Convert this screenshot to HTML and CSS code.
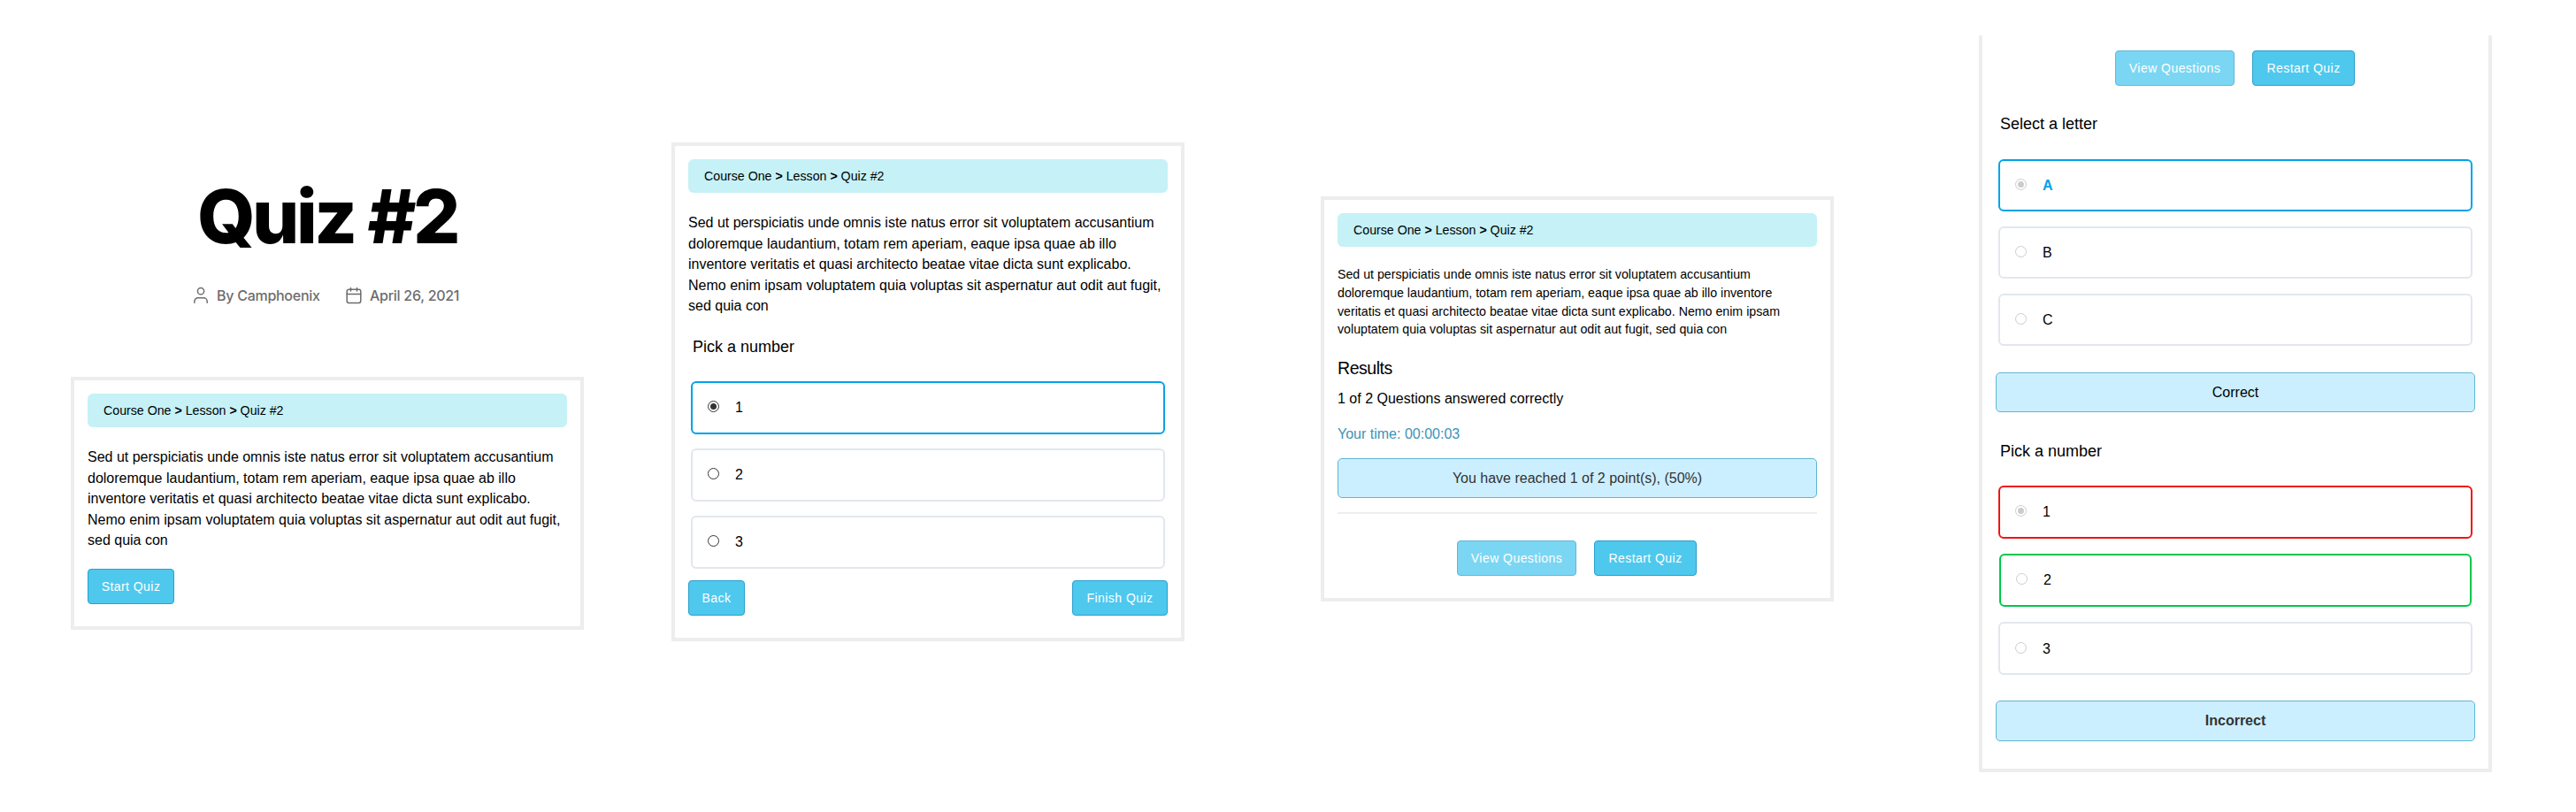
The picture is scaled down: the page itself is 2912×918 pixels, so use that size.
FILE: index.html
```html
<!DOCTYPE html>
<html lang="en">
<head>
<meta charset="utf-8">
<title>Quiz #2</title>
<link rel="stylesheet" href="styles.css">
</head>
<body>
<main class="page">
  <section class="column column--start">
    <header class="post-header">
      <h1 class="post-title">Quiz #2</h1>
      <div class="post-meta">
        <span class="meta-item meta-item--author">
          <svg class="meta-icon" width="18" height="20" viewBox="0 0 18 20" fill="none" stroke="currentColor" stroke-width="1.5" stroke-linecap="round"><circle cx="9" cy="5.2" r="3.6"/><path d="M1.800 18.300v-1.500a4 4 0 0 1 4-4h6.400a4 4 0 0 1 4 4v1.500"/></svg>
          <span>By Camphoenix</span>
        </span>
        <span class="meta-item">
          <svg class="meta-icon" width="18" height="20" viewBox="0 0 18 20" fill="none" stroke="currentColor" stroke-width="1.5" stroke-linecap="round"><rect x="1.200" y="3.200" width="15.600" height="15.300" rx="2.200"/><path d="M1.200 8.500h15.600M5.500 1.500v3.500M12.500 1.500v3.500"/></svg>
          <span>April 26, 2021</span>
        </span>
      </div>
    </header>
    <div class="card">
      <nav class="crumbs">Course One <b>&gt;</b> Lesson <b>&gt;</b> Quiz #2</nav>
      <p class="intro">Sed ut perspiciatis unde omnis iste natus error sit voluptatem accusantium<br>doloremque laudantium, totam rem aperiam, eaque ipsa quae ab illo<br>inventore veritatis et quasi architecto beatae vitae dicta sunt explicabo.<br>Nemo enim ipsam voluptatem quia voluptas sit aspernatur aut odit aut fugit,<br>sed quia con</p>
      <div class="actions actions--start"><button class="btn btn--start">Start Quiz</button></div>
    </div>
  </section>

  <section class="column column--question">
    <div class="card">
      <nav class="crumbs">Course One <b>&gt;</b> Lesson <b>&gt;</b> Quiz #2</nav>
      <p class="intro">Sed ut perspiciatis unde omnis iste natus error sit voluptatem accusantium<br>doloremque laudantium, totam rem aperiam, eaque ipsa quae ab illo<br>inventore veritatis et quasi architecto beatae vitae dicta sunt explicabo.<br>Nemo enim ipsam voluptatem quia voluptas sit aspernatur aut odit aut fugit,<br>sed quia con</p>
      <h2 class="question">Pick a number</h2>
      <div class="options">
        <label class="option option--selected"><span class="radio radio--on"></span><span class="option-text">1</span></label>
        <label class="option"><span class="radio"></span><span class="option-text">2</span></label>
        <label class="option"><span class="radio"></span><span class="option-text">3</span></label>
      </div>
      <div class="actions actions--split">
        <button class="btn btn--back">Back</button>
        <button class="btn btn--finish">Finish Quiz</button>
      </div>
    </div>
  </section>

  <section class="column column--results">
    <div class="card">
      <nav class="crumbs">Course One <b>&gt;</b> Lesson <b>&gt;</b> Quiz #2</nav>
      <p class="intro intro--small">Sed ut perspiciatis unde omnis iste natus error sit voluptatem accusantium<br>doloremque laudantium, totam rem aperiam, eaque ipsa quae ab illo inventore<br>veritatis et quasi architecto beatae vitae dicta sunt explicabo. Nemo enim ipsam<br>voluptatem quia voluptas sit aspernatur aut odit aut fugit, sed quia con</p>
      <h2 class="results-title">Results</h2>
      <p class="score">1 of 2 Questions answered correctly</p>
      <p class="time">Your time: 00:00:03</p>
      <div class="notice notice--points">You have reached 1 of 2 point(s), (50%)</div>
      <hr class="divider">
      <div class="actions actions--center">
        <button class="btn btn--view">View Questions</button>
        <button class="btn btn--restart">Restart Quiz</button>
      </div>
    </div>
  </section>

  <section class="column column--review">
    <div class="card card--open">
      <div class="actions actions--center">
        <button class="btn btn--view">View Questions</button>
        <button class="btn btn--restart">Restart Quiz</button>
      </div>
      <h2 class="question question--first">Select a letter</h2>
      <div class="options options--compact">
        <label class="option option--selected"><span class="radio radio--disabled radio--on"></span><span class="option-text option-text--selected">A</span></label>
        <label class="option"><span class="radio radio--disabled"></span><span class="option-text">B</span></label>
        <label class="option"><span class="radio radio--disabled"></span><span class="option-text">C</span></label>
      </div>
      <div class="notice notice--correct">Correct</div>
      <h2 class="question question--second">Pick a number</h2>
      <div class="options options--marked">
        <label class="option option--wrong"><span class="radio radio--disabled radio--on"></span><span class="option-text">1</span></label>
        <label class="option option--right"><span class="radio radio--disabled"></span><span class="option-text">2</span></label>
        <label class="option option--last"><span class="radio radio--disabled"></span><span class="option-text">3</span></label>
      </div>
      <div class="notice notice--incorrect">Incorrect</div>
    </div>
  </section>
</main>
</body>
</html>
```
FILE: styles.css
```css
* { box-sizing: border-box; }
body { margin: 0; background: #fff; color: #000; font-family: "Liberation Sans", Arial, sans-serif; font-size: 16px; }
h1, h2, p { margin: 0; font-weight: 400; }

.page { display: flex; align-items: flex-start; width: 2912px; height: 918px; overflow: hidden; }
.column { width: 580px; flex: none; }
.column--start { margin-left: 80px; padding-top: 194px; }
.column--question { margin-left: 99px; padding-top: 161px; }
.column--results { margin-left: 154px; padding-top: 222px; }
.column--review { margin-left: 164px; padding-top: 40px; }

.post-header { height: 232px; font-family: Inter, sans-serif; }
.post-title { padding-top: 1px; font-size: 84px; line-height: 100px; font-weight: 800; letter-spacing: -3.5px; text-align: center; }
.post-meta { display: flex; padding: 27px 0 0 138px; color: #6d6d6d; font-size: 16px; font-weight: 500; letter-spacing: -0.27px; }
.meta-item { display: flex; align-items: center; gap: 9px; height: 24px; white-space: nowrap; }
.meta-item--author { width: 173px; }
.meta-icon { flex: none; }

.card { border: 4px solid #ededed; padding: 15px 15px 25px; }
.card--open { border-top: 0; padding: 17px 15px 31px; }

.crumbs { height: 38px; padding-left: 18px; border-radius: 6px; background: #c5f1f7; font-size: 14.2px; line-height: 38px; white-space: nowrap; }
.intro { margin-top: 22px; line-height: 23.5px; white-space: nowrap; }
.intro--small { margin-top: 21px; font-size: 14.2px; line-height: 20.8px; }

.question { margin: 22.5px 0 27px 5px; font-size: 18px; line-height: 24px; }
.question--first { margin: 31px 0 28px 5px; }
.question--second { margin: 32px 0 27px 5px; }

.options { display: flex; flex-direction: column; gap: 16px; padding: 0 3px; }
.options--compact, .options--marked { gap: 17px; }
.option { display: flex; align-items: flex-start; gap: 18px; height: 60px; padding: 16px 17px 0; border: 2px solid #e2e7ed; border-radius: 6px; line-height: 23px; }
.options--compact .option { height: 59px; }
.option--selected { border-color: #00a2e8; }
.option--wrong { border-color: #f01414; }
.option--right { margin: 0 1px; border-color: #00c74b; padding-left: 17px; }
.option--last { padding-top: 17px; }
.option-text--selected { color: #00a2e8; font-weight: 700; }

.radio { display: grid; place-items: center; width: 13px; height: 13px; margin-top: 4px; border: 1px solid #333; border-radius: 50%; color: #333; background: #fff; }
.radio--on::after { content: ""; width: 7px; height: 7px; border-radius: 50%; background: currentColor; }
.radio--disabled { border-color: #ccc; color: #ccc; }

.btn { height: 40px; padding: 0; border: 1px solid #2aa0cd; border-radius: 4px; background: #4fc8ee; color: #fff; font: 14px "Liberation Sans", Arial, sans-serif; letter-spacing: 0.45px; white-space: nowrap; }
.btn--start { width: 98px; }
.btn--back { width: 64px; }
.btn--finish { width: 108px; }
.btn--view { width: 135px; border-color: #5fb8da; background: #7bd6f3; }
.btn--restart { width: 116px; }
.actions { display: flex; }
.actions--start { padding-top: 20.5px; }
.actions--split { justify-content: space-between; padding-top: 13px; }
.actions--center { justify-content: center; gap: 20px; padding-right: 1px; }

.results-title { margin-top: 20.6px; font-size: 19.5px; line-height: 24px; letter-spacing: -0.45px; }
.score { margin-top: 11px; line-height: 24px; }
.time { margin-top: 16px; line-height: 24px; color: #3c93b6; }
.notice { height: 45px; border: 1px solid #5fb6d4; border-radius: 5px; background: #ccefff; line-height: 43px; text-align: center; }
.notice--points { margin-top: 15px; color: #333; }
.notice--correct { margin-top: 30px; }
.notice--incorrect { height: 46px; margin-top: 29px; line-height: 44px; color: #333; font-weight: 700; }
.divider { height: 2px; margin: 16px 0 30px; border: 0; background: #eceff3; }
```
